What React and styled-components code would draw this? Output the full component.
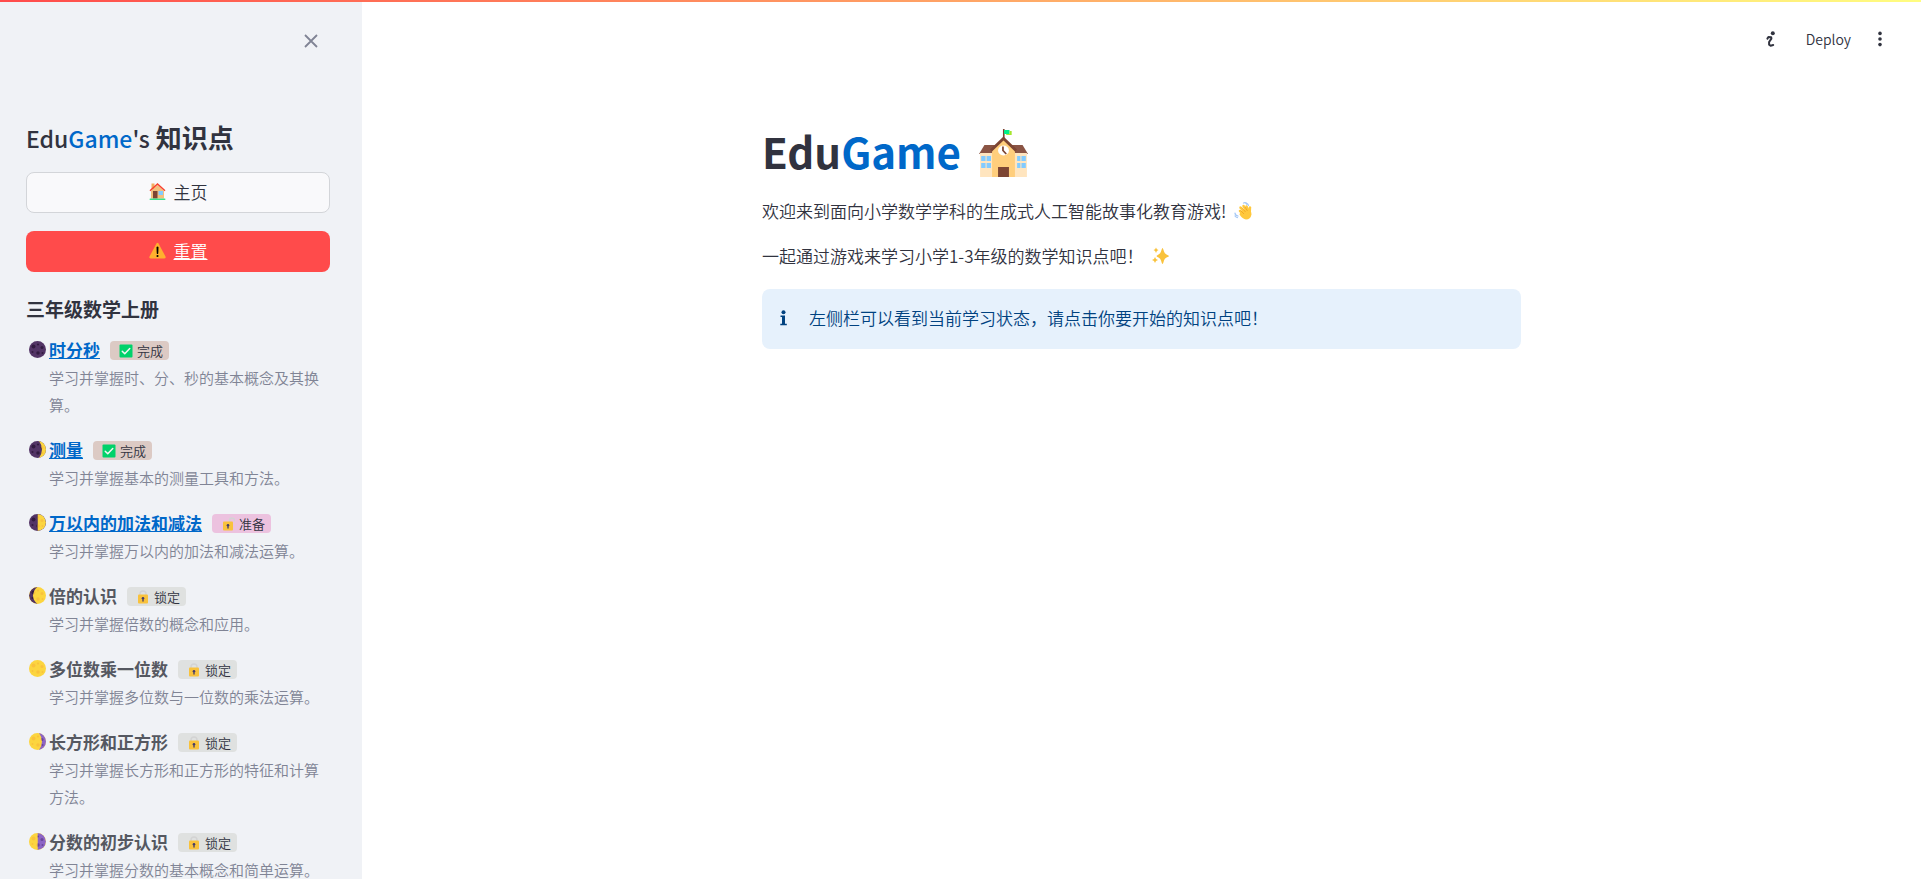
import React from "react";
import styled, { createGlobalStyle, css } from "styled-components";

const GlobalStyle = createGlobalStyle`
  *, *::before, *::after { box-sizing: border-box; }
  body {
    margin: 0;
    background: #ffffff;
    color: #31333f;
    font-family: "Noto Sans CJK SC", "Noto Sans", sans-serif;
    font-size: 17px;
    font-weight: 350;
  }
`;

const Shell = styled.div`
  display: flex;
  height: 100vh;
  overflow: hidden;
`;

const Decoration = styled.div`
  position: fixed;
  inset: 0 0 auto 0;
  height: 2px;
  background: linear-gradient(90deg, #ff4b4b, #fffd80);
  z-index: 10;
`;

const Sidebar = styled.aside`
  flex: none;
  width: 362px;
  padding: 0 32px 0 26px;
  background: #f0f2f6;
  overflow-y: auto;
  scrollbar-width: none;
`;

const SidebarHeader = styled.div`
  display: flex;
  justify-content: flex-end;
  align-items: flex-start;
  height: 117px;
  padding-top: 25px;
  padding-right: 3px;
`;

const IconButton = styled.button`
  display: flex;
  align-items: center;
  justify-content: center;
  width: 32px;
  height: 32px;
  padding: 0;
  border: 0;
  background: transparent;
  color: ${(p) => p.$color || "#31333f"};
  cursor: pointer;
`;

const Accent = styled.span`
  color: #0068c9;
`;

const SidebarTitle = styled.h2`
  margin: 0 0 14px;
  font-size: 26px;
  line-height: 40px;
  font-weight: 700;
  white-space: nowrap;
`;

const Brand = styled.span`
  font-size: 23px;
  font-weight: 500;
`;

const Actions = styled.div`
  display: flex;
  flex-direction: column;
  gap: 18px;
`;

const actionStyle = css`
  display: flex;
  align-items: center;
  justify-content: center;
  gap: 8px;
  width: 100%;
  height: 41px;
  padding: 0 0 2px;
  border-radius: 8px;
  font: inherit;
  cursor: pointer;
`;

const HomeButton = styled.button`
  ${actionStyle}
  border: 1px solid #d3d5d9;
  background: #f9f9fb;
  color: #31333f;
`;

const ResetLink = styled.a`
  ${actionStyle}
  background: #ff4b4b;
  color: #ffffff;
`;

const SectionTitle = styled.h3`
  margin: 23px 0 14px;
  font-size: 19px;
  line-height: 27px;
  font-weight: 700;
`;

const TopicList = styled.ul`
  display: flex;
  flex-direction: column;
  gap: 18px;
  margin: 0;
  padding: 0 0 18px 3px;
  list-style: none;
`;

const TopicHead = styled.div`
  display: flex;
  align-items: center;
  height: 27px;
`;

const topicName = css`
  margin-left: 3px;
  font-size: 17px;
  line-height: 27px;
  font-weight: 700;
`;

const TopicLink = styled.a`
  ${topicName}
  color: #0068c9;
`;

const TopicLabel = styled.span`
  ${topicName}
  color: #555861;
`;

const badgeColors = { done: "#dccac4", ready: "#ecc2df", locked: "#dfe1e0" };

const Badge = styled.span`
  display: inline-flex;
  align-items: center;
  gap: 4px;
  height: 19px;
  margin: 2px 0 0 10px;
  padding: 0 6px 0 9px;
  border-radius: 4px;
  background: ${(p) => badgeColors[p.$status]};
  font-size: 13px;
  line-height: 19px;
`;

const TopicText = styled.p`
  margin: 1px 0 0;
  padding-left: 20px;
  color: #808495;
  font-size: 15px;
  line-height: 27px;
`;

const Main = styled.main`
  flex: 1;
  min-width: 0;
  overflow-y: auto;
`;

const Toolbar = styled.header`
  display: flex;
  align-items: center;
  justify-content: flex-end;
  height: 77px;
  padding-right: 25px;
`;

const DeployButton = styled.button`
  margin: 0 13px 0 19px;
  padding: 0;
  border: 0;
  background: transparent;
  color: #31333f;
  font: inherit;
  font-size: 14px;
  line-height: 20px;
  cursor: pointer;
`;

const Content = styled.div`
  width: 100%;
  max-width: 759px;
  margin: 0 auto;
  padding-top: 48px;
`;

const PageTitle = styled.h1`
  display: flex;
  align-items: flex-end;
  gap: 18px;
  margin: 0 0 20px;
  font-size: 42px;
  line-height: 52px;
  font-weight: 700;
`;

const Paragraph = styled.p`
  display: flex;
  align-items: center;
  gap: 8px;
  margin: 0 0 18px;
  line-height: 27px;
`;

const InfoBox = styled.div`
  display: flex;
  align-items: center;
  gap: 22px;
  height: 60px;
  margin-top: 20px;
  padding: 0 18px 3px;
  border-radius: 8px;
  background: #e6f1fc;
  color: #004280;
  line-height: 27px;
`;

const Glyph = styled.svg`
  display: block;
  flex: none;
`;

function CloseIcon() {
  return (
    <Glyph width="14" height="14" viewBox="0 0 14 14" fill="none" stroke="currentColor" strokeWidth="1.8">
      <path d="M1 1 L13 13 M13 1 L1 13" />
    </Glyph>
  );
}

function RunnerIcon() {
  return (
    <Glyph width="10" height="16" viewBox="0 0 10 16" fill="none" stroke="currentColor" strokeWidth="2" strokeLinecap="round" strokeLinejoin="round">
      <circle cx="6.8" cy="2.2" r="2" fill="currentColor" stroke="none" />
      <path d="M1.4 7.6 L2.4 6 L5.2 6.2 L5.4 7.6 L3.1 11 L3.1 13.6 L4.6 14.7 L7.2 14" />
    </Glyph>
  );
}

function MenuIcon() {
  return (
    <Glyph width="4" height="16" viewBox="0 0 4 16" fill="currentColor">
      <circle cx="2" cy="2.4" r="1.8" />
      <circle cx="2" cy="8" r="1.8" />
      <circle cx="2" cy="13.6" r="1.8" />
    </Glyph>
  );
}

function HouseIcon() {
  return (
    <Glyph width="17" height="17" viewBox="0 0 34 34">
      <rect x="5" y="1" width="6" height="12" fill="#f3ad61" />
      <path d="M4 16 L17 4 L30 16 V31 H4 Z" fill="#f3c07c" />
      <rect x="8" y="16" width="9" height="15" fill="#7d4533" />
      <rect x="19" y="16" width="9" height="8" fill="#83cbff" />
      <path d="M2 15.5 L17 2 L32 15.5" fill="none" stroke="#f8412d" strokeWidth="3" />
      <rect x="1" y="31" width="32" height="3" rx="1.5" fill="#3ee089" />
    </Glyph>
  );
}

function WarningIcon() {
  return (
    <Glyph width="17" height="17" viewBox="0 0 34 34">
      <path d="M15 3 Q17 0 19 3 L33 29 Q34 33 30 33 H4 Q0 33 1 29 Z" fill="#ffb02e" />
      <path d="M15 10 Q17 8 19 10 L18.5 23 Q17 25 15.5 23 Z" fill="#000000" />
      <circle cx="17" cy="28" r="2.1" fill="#000000" />
    </Glyph>
  );
}

const moonShades = {
  dark: ["#533566", "#321b41"],
  yellow: ["#fcd53f", "#f9c23c"],
  purple: ["#8d65c5", "#6a459c"],
};

const phases = {
  new: { base: "dark" },
  waxingCrescent: { base: "dark", over: "yellow", shape: "M20 0 A17 17 0 0 1 20 34 Q26 25 26 17 Q26 8 20 0 Z" },
  firstQuarter: { base: "dark", over: "yellow", shape: "M17 0 A17 17 0 0 1 17 34 Z" },
  waxingGibbous: { base: "yellow", over: "dark", shape: "M17 0 A17 17 0 0 0 17 34 Q8 27 8 17 Q8 7 17 0 Z" },
  full: { base: "yellow" },
  waningGibbous: { base: "yellow", over: "purple", shape: "M20 0 A17 17 0 0 1 20 34 Q26 26 26 17 Q26 8 20 0 Z" },
  lastQuarter: { base: "yellow", over: "purple", shape: "M17 0 A17 17 0 0 1 17 34 Z" },
};

function Craters({ fill }) {
  return (
    <g fill={fill}>
      <circle cx="9" cy="11" r="4" />
      <circle cx="18" cy="7" r="2.2" />
      <circle cx="26" cy="13" r="3" />
      <circle cx="18" cy="24" r="3.5" />
      <circle cx="7" cy="22" r="2" />
      <circle cx="27" cy="24" r="2" />
    </g>
  );
}

function MoonIcon({ phase }) {
  const { base, over, shape } = phases[phase];
  const clip = `moon-${phase}`;
  return (
    <Glyph width="17" height="17" viewBox="0 0 34 34">
      <circle cx="17" cy="17" r="17" fill={moonShades[base][0]} />
      <Craters fill={moonShades[base][1]} />
      {over && (
        <>
          <clipPath id={clip}>
            <path d={shape} />
          </clipPath>
          <g clipPath={`url(#${clip})`}>
            <circle cx="17" cy="17" r="17" fill={moonShades[over][0]} />
            <Craters fill={moonShades[over][1]} />
          </g>
        </>
      )}
    </Glyph>
  );
}

function CheckIcon() {
  return (
    <Glyph width="14" height="14" viewBox="0 0 28 28">
      <rect x="1" y="1" width="26" height="26" rx="2" fill="#00d26a" />
      <path d="M6.5 14.5 L11.5 19.5 L21.5 9" fill="none" stroke="#f4f4f4" strokeWidth="3" strokeLinecap="round" strokeLinejoin="round" />
    </Glyph>
  );
}

function LockIcon({ open }) {
  return (
    <Glyph width="14" height="14" viewBox="0 0 28 28">
      <path
        d={open ? "M17 12 V7 Q17 2 22 2 Q27 2 27 7 V9" : "M8 12 V8 Q8 2 14 2 Q20 2 20 8 V12"}
        fill="none"
        stroke="#d3d3d3"
        strokeWidth="3"
      />
      <rect x="4" y="9" width="20" height="18" rx="2" fill="#f9c23c" />
      <circle cx="14" cy="16.5" r="2.6" fill="#433b6b" />
      <path d="M13 17 H15 L15.5 23 H12.5 Z" fill="#433b6b" />
    </Glyph>
  );
}

function SchoolIcon() {
  return (
    <Glyph width="49" height="48" viewBox="2 0 45 48" preserveAspectRatio="none">
      <path d="M7 16 H42 L47 25 H2 Z" fill="#8a5444" />
      <rect x="3" y="24" width="43" height="24" fill="#ffe5bf" />
      <path d="M14 21 L24.5 9 L35 21 V48 H14 Z" fill="#ffce7c" />
      <path d="M13 21.5 L24.5 9.5 L36 21.5" fill="none" stroke="#7d4533" strokeWidth="2.6" />
      <rect x="24" y="0" width="1.5" height="9" fill="#7d4533" />
      <path d="M25 1 H30 V5 H25 Z" fill="#00f08a" />
      <path d="M30 2 H32 V6 H27 V5 H30 Z" fill="#a6e62e" />
      <circle cx="24.5" cy="21.5" r="5" fill="#ffffff" />
      <path d="M24 17.5 V21.5 L27 25" fill="none" stroke="#7d4533" strokeWidth="1.6" />
      <rect x="19.500" y="38" width="10" height="10" fill="#7d4533" />
      <g fill="#83cbff">
        <rect x="4" y="27" width="4" height="5" />
        <rect x="9" y="27" width="4" height="5" />
        <rect x="4" y="34" width="4" height="5" />
        <rect x="9" y="34" width="4" height="5" />
        <rect x="37" y="27" width="3" height="5" />
        <rect x="41" y="27" width="4" height="5" />
        <rect x="37" y="34" width="3" height="5" />
        <rect x="41" y="34" width="4" height="5" />
      </g>
    </Glyph>
  );
}

function WaveIcon() {
  return (
    <Glyph width="18" height="18" viewBox="0 0 36 36">
      <g fill="none" stroke="#ffc83d" strokeWidth="5" strokeLinecap="round">
        <path d="M12 18 L20 27" />
        <path d="M13 11 L22 22" />
        <path d="M19 8 L27 20" />
        <path d="M25 9 L29 18" />
        <path d="M32 11 L31 24" />
      </g>
      <path d="M13 19 L27 12 Q35 17 35 25 Q33 35 24 35 Q17 34 11 25 Z" fill="#ffc83d" />
      <path d="M13 17 L20 24 M16 11 L23 20 M22 10 L27 18" stroke="#e8961a" strokeWidth="1.2" fill="none" />
      <g fill="none" stroke="#a6c8f5" strokeWidth="2.5" strokeLinecap="round">
        <path d="M19 2 Q24 0 26 5" />
        <path d="M24 2 Q28 3 29 7" />
        <path d="M2 22 Q2 27 8 28" />
        <path d="M2 28 Q4 31 7 31" />
      </g>
    </Glyph>
  );
}

function SparklesIcon() {
  return (
    <Glyph width="17" height="17" viewBox="0 0 34 34">
      <g fill="#f9c23c">
        <path d="M21 2 Q22 2 24 9 Q25 13 29 15 Q34 17 34 18 Q34 19 29 21 Q25 23 24 27 Q22 34 21 34 Q20 34 18 27 Q17 23 13 21 Q9 19 9 18 Q9 17 13 15 Q17 13 18 9 Q20 2 21 2 Z" />
        <path d="M8 1 Q9 5 13 6 Q9 7 8 12 Q7 7 3 6 Q7 5 8 1 Z" />
        <path d="M6 20 Q7 25 12 26 Q7 27 6 32 Q5 27 0 26 Q5 25 6 20 Z" />
      </g>
    </Glyph>
  );
}

function InfoIcon() {
  return (
    <Glyph width="7" height="16" viewBox="0 0 7 16" fill="currentColor">
      <circle cx="3.5" cy="2.2" r="2" />
      <path d="M0.5 5.5 H5 V13.8 H6.8 V15.2 H0.3 V13.8 H2 V7 H0.5 Z" />
    </Glyph>
  );
}

const statusLabels = { done: "完成", ready: "准备", locked: "锁定" };

const topics = [
  { phase: "new", name: "时分秒", status: "done", text: "学习并掌握时、分、秒的基本概念及其换算。" },
  { phase: "waxingCrescent", name: "测量", status: "done", text: "学习并掌握基本的测量工具和方法。" },
  { phase: "firstQuarter", name: "万以内的加法和减法", status: "ready", text: "学习并掌握万以内的加法和减法运算。" },
  { phase: "waxingGibbous", name: "倍的认识", status: "locked", text: "学习并掌握倍数的概念和应用。" },
  { phase: "full", name: "多位数乘一位数", status: "locked", text: "学习并掌握多位数与一位数的乘法运算。" },
  { phase: "waningGibbous", name: "长方形和正方形", status: "locked", text: "学习并掌握长方形和正方形的特征和计算方法。" },
  { phase: "lastQuarter", name: "分数的初步认识", status: "locked", text: "学习并掌握分数的基本概念和简单运算。" },
];

function Topic({ phase, name, status, text }) {
  return (
    <li>
      <TopicHead>
        <MoonIcon phase={phase} />
        {status === "locked" ? <TopicLabel>{name}</TopicLabel> : <TopicLink href="#">{name}</TopicLink>}
        <Badge $status={status}>
          {status === "done" ? <CheckIcon /> : <LockIcon open={status === "ready"} />}
          {statusLabels[status]}
        </Badge>
      </TopicHead>
      <TopicText>{text}</TopicText>
    </li>
  );
}

export default function App() {
  return (
    <>
      <GlobalStyle />
      <Decoration />
      <Shell>
        <Sidebar>
          <SidebarHeader>
            <IconButton type="button" aria-label="Close sidebar" $color="#808495">
              <CloseIcon />
            </IconButton>
          </SidebarHeader>
          <SidebarTitle>
            <Brand>
              Edu<Accent>Game</Accent>'s
            </Brand>{" "}
            知识点
          </SidebarTitle>
          <Actions>
            <HomeButton type="button">
              <HouseIcon />
              主页
            </HomeButton>
            <ResetLink href="#">
              <WarningIcon />
              重置
            </ResetLink>
          </Actions>
          <SectionTitle>三年级数学上册</SectionTitle>
          <TopicList>
            {topics.map((topic) => (
              <Topic key={topic.name} {...topic} />
            ))}
          </TopicList>
        </Sidebar>
        <Main>
          <Toolbar>
            <IconButton type="button" aria-label="Running">
              <RunnerIcon />
            </IconButton>
            <DeployButton type="button">Deploy</DeployButton>
            <IconButton type="button" aria-label="Menu">
              <MenuIcon />
            </IconButton>
          </Toolbar>
          <Content>
            <PageTitle>
              <span>
                Edu<Accent>Game</Accent>
              </span>
              <SchoolIcon />
            </PageTitle>
            <Paragraph>
              欢迎来到面向小学数学学科的生成式人工智能故事化教育游戏!
              <WaveIcon />
            </Paragraph>
            <Paragraph>
              一起通过游戏来学习小学1-3年级的数学知识点吧！
              <SparklesIcon />
            </Paragraph>
            <InfoBox role="alert">
              <InfoIcon />
              左侧栏可以看到当前学习状态，请点击你要开始的知识点吧！
            </InfoBox>
          </Content>
        </Main>
      </Shell>
    </>
  );
}
